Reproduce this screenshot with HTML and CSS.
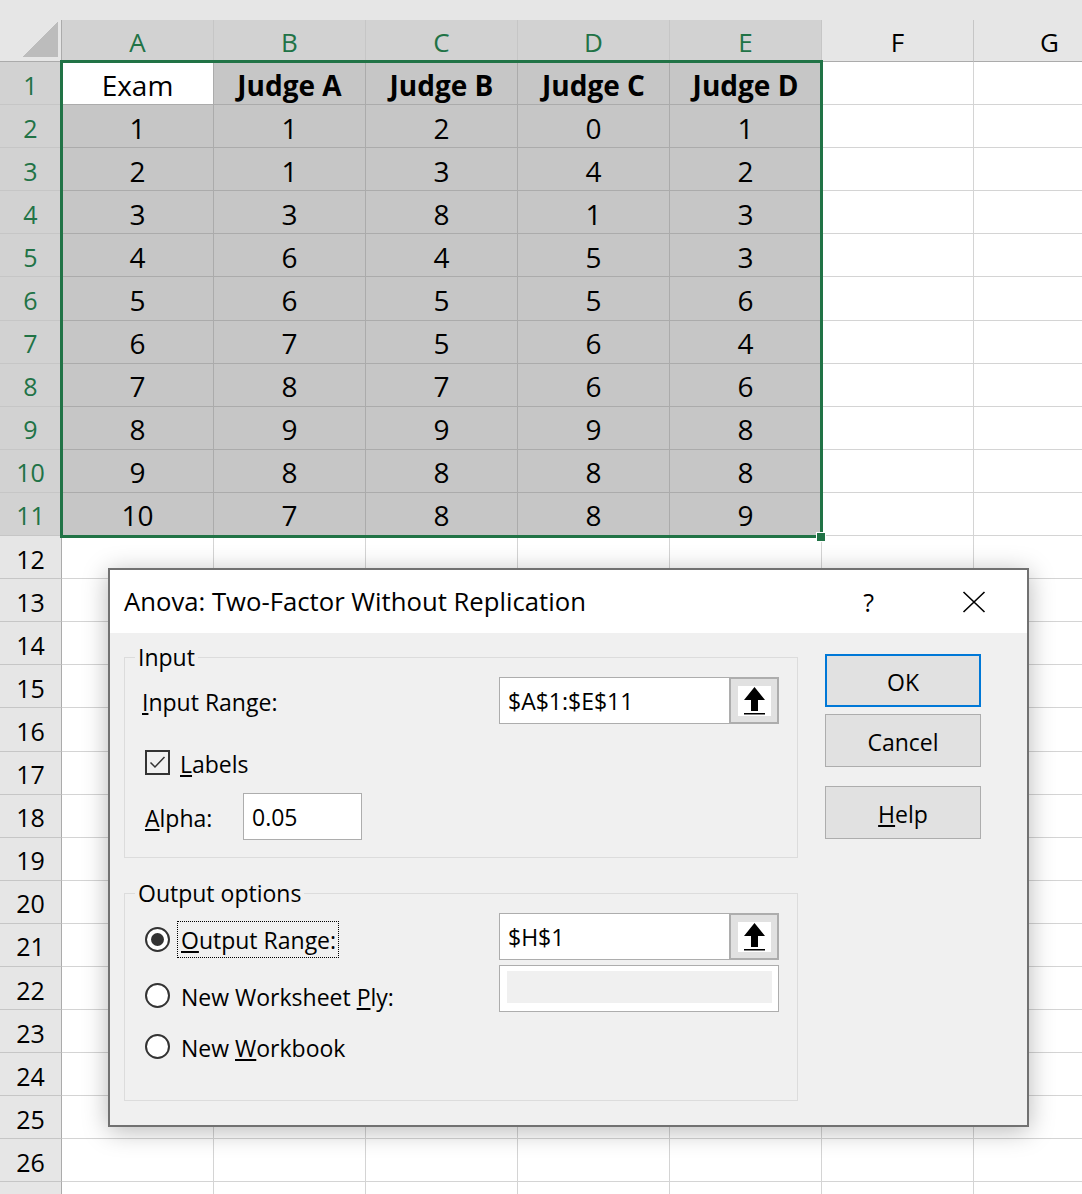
FILE: index.html
```html
<!DOCTYPE html>
<html lang="en">
<head>
    <meta charset="UTF-8">
    <title>Anova: Two-Factor Without Replication</title>
    <link rel="stylesheet" href="styles.css">
</head>
<body>
    <div class="topbar"></div>
    <div class="sheet" id="sheet"></div>
    <div class="selection"></div>
    <div class="fill-handle"></div>

    <div class="dialog">
        <div class="dialog-title">
            <span class="title-text">Anova: Two-Factor Without Replication</span>
            <span class="title-help">?</span>
            <svg class="title-close" width="24" height="22" viewBox="0 0 24 22">
                <path d="M1.5 1 L22.5 21 M22.5 1 L1.5 21" stroke="#000" stroke-width="1.6" fill="none"/>
            </svg>
        </div>

        <div class="dialog-body">
            <div class="groups">
                <fieldset class="group group-input">
                    <legend>Input</legend>
                    <div class="row row-range">
                        <span class="lbl"><u>I</u>nput Range:</span>
                        <div class="refedit">
                            <span class="refedit-text">$A$1:$E$11</span>
                            <span class="refedit-btn">
                                <svg width="33" height="30" viewBox="0 0 33 30">
                                    <rect width="33" height="30" fill="#fff"/>
                                    <polygon points="16.5,1 27,14 20,14 20,25 13,25 13,14 6,14" fill="#000"/>
                                    <rect x="6" y="27" width="21" height="1.5" fill="#000"/>
                                </svg>
                            </span>
                        </div>
                    </div>
                    <div class="row row-check">
                        <span class="checkbox">
                            <svg width="21" height="21" viewBox="0 0 21 21">
                                <polyline points="3.5,10.5 8,15 17.5,5" stroke="#333" stroke-width="1.5" fill="none"/>
                            </svg>
                        </span>
                        <span class="lbl"><u>L</u>abels</span>
                    </div>
                    <div class="row row-alpha">
                        <span class="lbl alpha-lbl"><u>A</u>lpha:</span>
                        <div class="textbox">0.05</div>
                    </div>
                </fieldset>

                <fieldset class="group group-output">
                    <legend>Output options</legend>
                    <div class="output-grid">
                        <div class="radios">
                            <div class="radio-row">
                                <span class="radio checked"></span>
                                <span class="lbl focus"><u>O</u>utput Range:</span>
                            </div>
                            <div class="radio-row second">
                                <span class="radio"></span>
                                <span class="lbl">New Worksheet <u>P</u>ly:</span>
                            </div>
                            <div class="radio-row third">
                                <span class="radio"></span>
                                <span class="lbl">New <u>W</u>orkbook</span>
                            </div>
                        </div>
                        <div class="fields">
                            <div class="refedit">
                                <span class="refedit-text">$H$1</span>
                                <span class="refedit-btn">
                                    <svg width="33" height="30" viewBox="0 0 33 30">
                                        <rect width="33" height="30" fill="#fff"/>
                                        <polygon points="16.5,1 27,14 20,14 20,25 13,25 13,14 6,14" fill="#000"/>
                                        <rect x="6" y="27" width="21" height="1.5" fill="#000"/>
                                    </svg>
                                </span>
                            </div>
                            <div class="disabled-box"><span></span></div>
                        </div>
                    </div>
                </fieldset>
            </div>

            <div class="buttons">
                <button class="btn btn-default">OK</button>
                <button class="btn">Cancel</button>
                <button class="btn btn-help"><u>H</u>elp</button>
            </div>
        </div>
    </div>

    <script>
        // dados da planilha (A1:E11)
        const data = [
            ['Exam', 'Judge A', 'Judge B', 'Judge C', 'Judge D'],
            [1, 1, 2, 0, 1],
            [2, 1, 3, 4, 2],
            [3, 3, 8, 1, 3],
            [4, 6, 4, 5, 3],
            [5, 6, 5, 5, 6],
            [6, 7, 5, 6, 4],
            [7, 8, 7, 6, 6],
            [8, 9, 9, 9, 8],
            [9, 8, 8, 8, 8],
            [10, 7, 8, 8, 9]
        ];
        const cols = ['A', 'B', 'C', 'D', 'E', 'F', 'G'];
        const sheet = document.getElementById('sheet');

        function add(cls, text) {
            const el = document.createElement('div');
            el.className = cls;
            if (text !== undefined) el.textContent = text;
            sheet.appendChild(el);
        }

        add('corner');
        cols.forEach((c, i) => add(i < 5 ? 'colhead sel' : 'colhead', c));

        // linha 27 fica cortada pela borda, sem numero
        for (let r = 1; r <= 27; r++) {
            const inSel = r <= 11;
            add(inSel ? 'rowhead sel' : 'rowhead', r < 27 ? r : undefined);
            for (let c = 0; c < 7; c++) {
                let cls = 'cell';
                let text;
                if (inSel && c < 5) {
                    cls += r === 1 && c === 0 ? ' active' : ' sel';
                    if (r === 1 && c > 0) cls += ' bold';
                    text = data[r - 1][c];
                }
                add(cls, text);
            }
        }
    </script>
</body>
</html>
```

FILE: styles.css
```css
* {
    box-sizing: border-box;
}
body {
    margin: 0;
    width: 1082px;
    height: 1194px;
    overflow: hidden;
    position: relative;
    background: #fff;
    font-family: "Open Sans", "Noto Sans", sans-serif;
    color: #000;
}

/* planilha */
.topbar {
    height: 20px;
    background: #e6e6e6;
}
.sheet {
    display: grid;
    grid-template-columns: 62px repeat(7, 152px);
    grid-template-rows: 42px repeat(27, 43.1px);
}
.corner {
    background: #e6e6e6 linear-gradient(135deg, transparent 50%, #bcbcbc 50%) no-repeat;
    background-size: 35px 35px;
    background-position: right 3px bottom 4px;
    border-right: 1px solid #ababab;
    border-bottom: 1px solid #ababab;
}
.colhead {
    background: #e6e6e6;
    border-right: 1px solid #c6c6c6;
    border-bottom: 1px solid #ababab;
    display: flex;
    justify-content: center;
    align-items: center;
    font-size: 26px;
    padding-top: 2px;
}
.colhead.sel {
    background: #d2d2d2;
    color: #217346;
}
.rowhead {
    background: #e6e6e6;
    border-right: 1px solid #ababab;
    border-bottom: 1px solid #c6c6c6;
    display: flex;
    justify-content: center;
    align-items: center;
    font-size: 25px;
    padding-top: 3px;
}
.rowhead.sel {
    background: #d2d2d2;
    color: #217346;
}
.cell {
    border-right: 1px solid #d4d4d4;
    border-bottom: 1px solid #d4d4d4;
    display: flex;
    justify-content: center;
    align-items: center;
    font-size: 28px;
    padding-top: 3px;
}
.cell.sel {
    background: #c6c6c6;
    border-color: #ababab;
}
.cell.active {
    background: #fff;
    border-color: #ababab;
}
.cell.bold {
    font-weight: bold;
}
.selection {
    position: absolute;
    left: 60px;
    top: 60px;
    width: 763px;
    height: 478px;
    border: 3px solid #217346;
}
.fill-handle {
    position: absolute;
    left: 816px;
    top: 532px;
    width: 10px;
    height: 10px;
    background: #217346;
    border: 1px solid #fff;
}

/* janela */
.dialog {
    position: absolute;
    left: 108px;
    top: 568px;
    width: 921px;
    height: 559px;
    border: 2px solid #717171;
    background: #f0f0f0;
    box-shadow: 0 4px 24px rgba(0, 0, 0, 0.28);
    font-size: 23px;
}
.dialog-title {
    height: 63px;
    background: #fff;
    display: flex;
    align-items: center;
    padding-left: 14px;
}
.title-text {
    font-size: 25.7px;
    flex: 1;
}
.title-help {
    font-size: 25px;
    margin-right: 88px;
}
.title-close {
    margin-right: 41px;
}
.dialog-body {
    display: flex;
    padding: 10px 0 0 14px;
}
.groups {
    width: 674px;
}
.group {
    margin: 0;
    border: 1px solid #dcdcdc;
    padding: 0 18px 17px 17px;
}
.group legend {
    padding: 0 3px;
    margin-left: -7px;
    line-height: 28px;
}
.group-output {
    margin-top: 21px;
    padding-bottom: 36px;
}
.row {
    display: flex;
    align-items: center;
}
.lbl {
    padding-top: 2px;
}
.row-range {
    margin-top: 6px;
    height: 47px;
    justify-content: space-between;
}
.row-check {
    margin-top: 26px;
    height: 25px;
    padding-left: 3px;
}
.row-alpha {
    margin-top: 18px;
    height: 47px;
    padding-left: 3px;
}
.alpha-lbl {
    width: 98px;
}
.checkbox {
    width: 25px;
    height: 25px;
    border: 2px solid #333;
    margin-right: 10px;
    display: flex;
}
.textbox {
    width: 119px;
    height: 47px;
    background: #fff;
    border: 1px solid #adadad;
    padding: 1px 0 0 8px;
    line-height: 45px;
}
.refedit {
    width: 280px;
    height: 47px;
    background: #fff;
    border: 1px solid #adadad;
    display: flex;
}
.refedit-text {
    flex: 1;
    padding: 1px 0 0 8px;
    line-height: 45px;
}
.refedit-btn {
    width: 50px;
    margin: -1px -1px -1px 0;
    background: #e1e1e1;
    border: 2px solid #adadad;
    display: flex;
    justify-content: center;
    align-items: center;
}
.output-grid {
    display: flex;
    justify-content: space-between;
}
.radios {
    padding-top: 15px;
}
.radio-row {
    display: flex;
    align-items: center;
    height: 35px;
    padding-left: 3px;
}
.radio-row.second {
    margin-top: 21px;
}
.radio-row.third {
    margin-top: 16px;
}
.radio {
    width: 25px;
    height: 25px;
    border: 2px solid #333;
    border-radius: 50%;
    background: #fff;
    margin-right: 11px;
    display: flex;
    justify-content: center;
    align-items: center;
}
.radio.checked::after {
    content: "";
    width: 13px;
    height: 13px;
    border-radius: 50%;
    background: #333;
}
.focus {
    outline: 1px dotted #000;
    outline-offset: 0;
    margin-left: -3px;
    padding: 1px 2px 0 3px;
    height: 35px;
    line-height: 34px;
}
.fields {
    padding-top: 6px;
}
.disabled-box {
    margin-top: 5px;
    width: 280px;
    height: 47px;
    background: #fff;
    border: 1px solid #adadad;
    padding: 5px 6px 8px 7px;
}
.disabled-box span {
    display: block;
    height: 100%;
    background: #f0f0f0;
}
.buttons {
    margin-left: 27px;
    padding-top: 11px;
    display: flex;
    flex-direction: column;
}
.btn {
    width: 156px;
    height: 53px;
    background: #e1e1e1;
    border: 1px solid #adadad;
    font-family: inherit;
    font-size: 23px;
    color: #000;
    padding: 2px 0 0;
}
.btn-default {
    border: 2px solid #0078d7;
}
.btn + .btn {
    margin-top: 7px;
}
.btn-help {
    margin-top: 19px !important;
}
```
